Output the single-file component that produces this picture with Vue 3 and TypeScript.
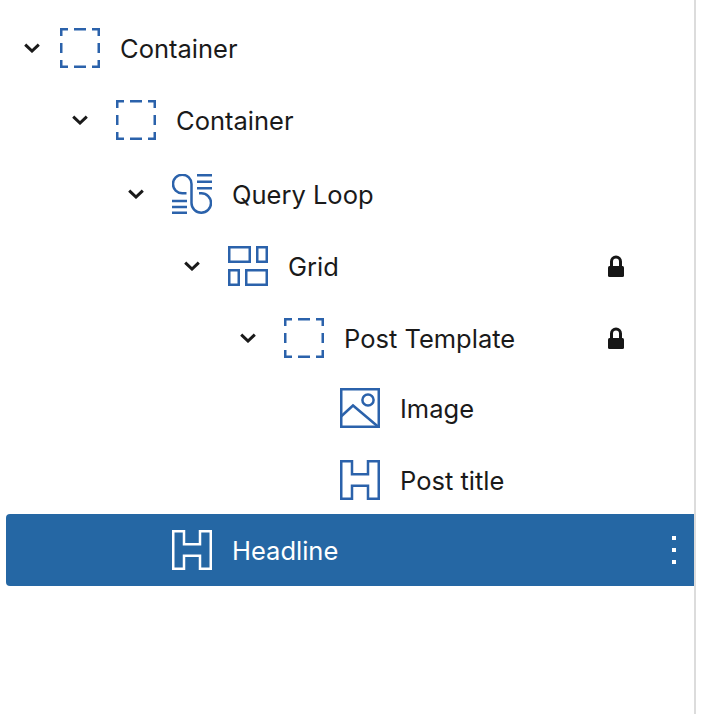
<script setup lang="ts">
type IconName = 'dashed' | 'loop' | 'grid' | 'image' | 'heading'

interface TreeRow {
  label: string
  icon: IconName
  level: number
  expandable?: boolean
  locked?: boolean
  selected?: boolean
  nudge?: number
}

const rows: TreeRow[] = [
  { label: 'Container', icon: 'dashed', level: 0, expandable: true },
  { label: 'Container', icon: 'dashed', level: 1, expandable: true },
  { label: 'Query Loop', icon: 'loop', level: 2, expandable: true, nudge: 2 },
  { label: 'Grid', icon: 'grid', level: 3, expandable: true, locked: true },
  { label: 'Post Template', icon: 'dashed', level: 4, expandable: true, locked: true },
  { label: 'Image', icon: 'image', level: 5, nudge: -2 },
  { label: 'Post title', icon: 'heading', level: 5 },
  { label: 'Headline', icon: 'heading', level: 2, selected: true, nudge: -2 },
]

const INDENT = 56
const BASE_PAD = 10
</script>

<template>
  <div class="panel">
    <div
      v-for="(row, i) in rows"
      :key="i"
      class="row"
      :class="{ selected: row.selected, root: row.level === 0 }"
      :style="{ paddingLeft: `${BASE_PAD + row.level * INDENT}px`, marginTop: `${row.nudge ?? 0}px` }"
    >
      <svg v-if="row.expandable" class="chevron" viewBox="0 0 16 10" fill="none">
        <path d="M1.2 1.6 8 8 14.8 1.6" stroke="currentColor" stroke-width="3" />
      </svg>
      <span v-else class="chevron"></span>

      <svg class="icon" viewBox="0 0 40 40" fill="none">
        <g v-if="row.icon === 'dashed'">
          <path d="M1.25 8V1.25H8M32 1.25H38.75V8M38.75 32V38.75H32M8 38.75H1.25V32" />
          <path d="M14 1.25H26M14 38.75H26M1.25 15V25M38.75 15V25" />
        </g>
        <g v-else-if="row.icon === 'loop'">
          <path d="M14.5 19.25H10.25A9.25 9.25 0 1 1 19.5 10V29A9.75 9.75 0 0 0 39 29 9.75 9.75 0 0 0 29.25 19.25H27" />
          <path d="M25 1.25H40M25 7.75H40M25 14.25H40M0 27H15M0 33H15M0 38.75H15" />
        </g>
        <g v-else-if="row.icon === 'grid'">
          <rect x="1.25" y="1.25" width="20.5" height="14.5" />
          <rect x="29.25" y="1.25" width="9.5" height="14.5" />
          <rect x="1.25" y="24.25" width="9.5" height="14.5" />
          <rect x="18.25" y="24.25" width="20.5" height="14.5" />
        </g>
        <g v-else-if="row.icon === 'image'">
          <rect x="1.25" y="1.25" width="37.5" height="37.5" />
          <circle cx="28" cy="12" r="5.6" />
          <path d="M1 28.5 13 17.5 38.5 39" />
        </g>
        <path
          v-else
          d="M1.25 1.25H12V14.25H28V1.25H38.75V38.75H28V25.75H12V38.75H1.25Z"
        />
      </svg>

      <span class="label">{{ row.label }}</span>

      <svg v-if="row.locked" class="lock" viewBox="0 0 16 22">
        <path d="M3.5 12V6.5a4.5 4.5 0 0 1 9 0V12" fill="none" stroke="currentColor" stroke-width="3" />
        <rect x="0" y="11" width="16" height="11" rx="1.5" fill="currentColor" />
      </svg>
      <span v-if="row.selected" class="more">
        <i></i>
        <i></i>
        <i></i>
      </span>
    </div>
  </div>
</template>

<style scoped>
.panel {
  box-sizing: border-box;
  width: 696px;
  height: 714px;
  padding: 12px 0 0 6px;
  border-right: 2px solid #dcdcdc;
  background: #fff;
  color: #1a1a1a;
  font-family: Inter, "Liberation Sans", sans-serif;
  overflow: hidden;
}
.row {
  display: flex;
  align-items: center;
  height: 72px;
  box-sizing: border-box;
  border-radius: 4px 0 0 4px;
}
.row.selected {
  background: #2567a4;
  color: #fff;
}
.chevron {
  flex: none;
  width: 16px;
  height: 10px;
  margin-right: 28px;
}
/* top level chevron sits closer to its icon */
.root .chevron {
  margin-left: 8px;
  margin-right: 20px;
}
.icon {
  flex: none;
  width: 40px;
  height: 40px;
  margin-right: 20px;
  stroke: #2b62ab;
  stroke-width: 2.5;
}
.selected .icon {
  stroke: #fff;
}
.label {
  font-size: 25.5px;
  line-height: 32px;
  padding-top: 2px;
}
.lock {
  flex: none;
  width: 16px;
  height: 22px;
  margin-left: auto;
  margin-right: 70px;
  color: #161616;
}
.more {
  margin-left: auto;
  margin-right: 18px;
  display: flex;
  flex-direction: column;
  gap: 8px;
}
.more i {
  display: block;
  width: 4px;
  height: 4px;
  background: #fff;
}
</style>
